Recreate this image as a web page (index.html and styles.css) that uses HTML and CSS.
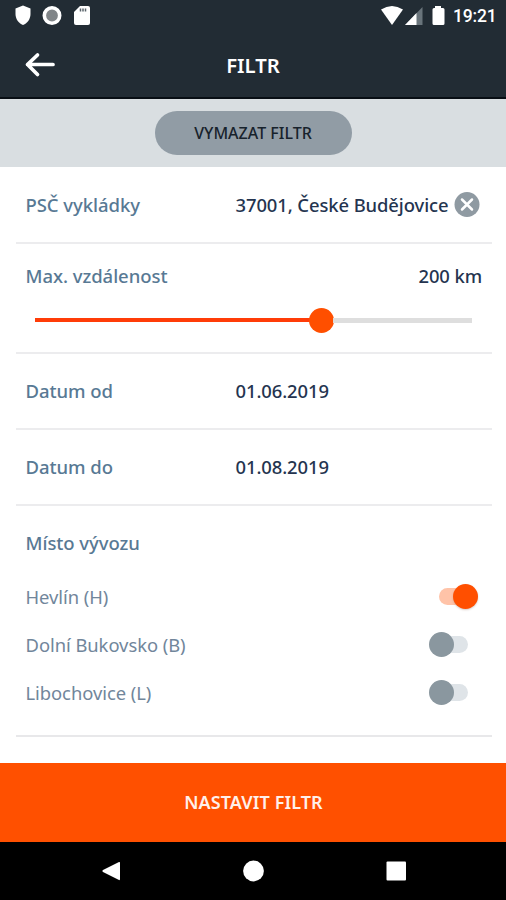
FILE: index.html
```html
<!DOCTYPE html>
<html lang="cs">
<head>
<meta charset="utf-8">
<title>Filtr</title>
<link rel="stylesheet" href="styles.css">
</head>
<body>
<div class="screen">
  <header class="top">
    <div class="status">
      <svg class="status-left" width="78" height="32" viewBox="0 0 78 32">
        <path d="M9 5.500L16.500 8.500V14C16.500 19 13.500 23 9 25C4.500 23 1.500 19 1.500 14V8.500Z" fill="#fff"/>
        <circle cx="38" cy="15.500" r="7.700" fill="#808588" stroke="#fff" stroke-width="3.600"/>
        <path d="M66 6H74Q76 6 76 8V23Q76 25 74 25H62Q60 25 60 23V12Z" fill="#fff"/>
        <path d="M66.500 8.500v3M69 8.500v3M71.500 8.500v3" stroke="#59636a" stroke-width="1.500"/>
      </svg>
      <svg class="status-right" width="66" height="32" viewBox="0 0 66 32">
        <path d="M0 9.500Q11 2.500 22 9.500L11 25Z" fill="#fff"/>
        <path d="M41.500 7V25H24Z" fill="#69747b"/>
        <path d="M35.500 13V25H24Z" fill="#fff"/>
        <path d="M54 6h6v2h2q1.500 0 1.500 1.500V23.500Q63.500 25 62 25H53Q51.500 25 51.500 23.500V9.500Q51.500 8 53 8h1Z" fill="#fff"/>
      </svg>
      <span class="clock">19:21</span>
    </div>
    <div class="bar">
      <svg class="back" width="32" height="28" viewBox="0 0 32 28">
        <path d="M29 13.500H3.500M13.500 4L3.500 13.500L13.500 23.500" fill="none" stroke="#fff" stroke-width="3.700" stroke-linecap="round" stroke-linejoin="round"/>
      </svg>
      <h1 class="title">FILTR</h1>
    </div>
  </header>
  <div class="clear-band"><button class="clear">VYMAZAT FILTR</button></div>
  <main class="form">
    <section class="row first">
      <span class="label">PSČ vykládky</span>
      <span class="value">37001, České Budějovice</span>
      <svg class="remove" width="26" height="26" viewBox="0 0 26 26">
        <circle cx="13" cy="12.500" r="12.500" fill="#8f9aa2"/>
        <path d="M8 7.500L18 17.500M18 7.500L8 17.500" stroke="#fff" stroke-width="2.500" stroke-linecap="round"/>
      </svg>
    </section>
    <section class="distance">
      <div class="distance-head">
        <span class="label">Max. vzdálenost</span>
        <span class="value">200 km</span>
      </div>
      <div class="slider">
        <span class="filled"></span><span class="thumb"></span><span class="rest"></span>
      </div>
    </section>
    <section class="row"><span class="label">Datum od</span><span class="value">01.06.2019</span></section>
    <section class="row"><span class="label">Datum do</span><span class="value">01.08.2019</span></section>
    <section class="places">
      <h2 class="label heading">Místo vývozu</h2>
      <div class="place"><span class="name">Hevlín (H)</span><span class="switch on"><i class="track"></i><i class="knob"></i></span></div>
      <div class="place"><span class="name">Dolní Bukovsko (B)</span><span class="switch"><i class="knob"></i><i class="track"></i></span></div>
      <div class="place"><span class="name">Libochovice (L)</span><span class="switch"><i class="knob"></i><i class="track"></i></span></div>
    </section>
  </main>
  <button class="submit">NASTAVIT FILTR</button>
  <nav class="nav">
    <svg width="506" height="58" viewBox="0 0 506 58" fill="#fff">
      <path d="M119 20Q120 19.500 120 21V37Q120 38.500 119 38L103 30Q101.500 29 103 28Z"/>
      <circle cx="253.500" cy="29" r="10.400"/>
      <rect x="386.500" y="19.500" width="19.500" height="19" rx="1"/>
    </svg>
  </nav>
</div>
</body>
</html>
```
FILE: styles.css
```css
* { box-sizing: border-box; }
body { margin: 0; background: #fff; font-family: "Noto Sans", "Open Sans", sans-serif; }
button { border: 0; padding: 0; font-family: inherit; }
.screen { width: 506px; height: 900px; display: flex; flex-direction: column; overflow: hidden; }
.top { height: 99px; background: #222c34; border-bottom: 2px solid #080e14; color: #fff; }
.status { display: flex; height: 32px; padding: 0 10px 0 14px; align-items: center; }
.status-right { margin-left: auto; }
.clock { margin-left: 6px; width: 43px; font: 500 17.500px/32px Roboto, sans-serif; text-align: right; letter-spacing: -0.2px; white-space: nowrap; }
.bar { display: grid; grid-template-columns: 32px 1fr 32px; align-items: center; height: 65px; padding: 0 24px; }
.title { margin: 0; font-size: 20.300px; font-weight: 600; line-height: 28px; text-align: center; }
.clear-band { height: 68px; background: #d9dee1; display: flex; justify-content: center; padding-top: 12px; }
.clear { width: 197px; height: 44px; border-radius: 22px; background: #919ca5; color: #17222c; font-size: 16px; font-weight: 500; padding-bottom: 1px; }
.form { height: 596px; padding: 0 14px 0 16px; }
.row { display: flex; align-items: center; height: 76px; padding: 0 10px 0 9.500px; border-bottom: 2px solid #ececee; }
.row.first { height: 77px; padding-right: 12px; }
.label { width: 210px; font-size: 18.500px; font-weight: 500; color: #587994; line-height: 26px; letter-spacing: -0.05px; }
.value { font-size: 18.400px; font-weight: 500; color: #24344f; line-height: 26px; letter-spacing: -0.08px; white-space: nowrap; }
.remove { margin-left: auto; }
.distance { height: 110px; padding: 19px 10px 0 9.500px; border-bottom: 2px solid #ececee; }
.distance-head { display: flex; justify-content: space-between; }
.slider { display: flex; align-items: center; height: 26px; margin: 18px 10px 0 9.500px; }
.filled { width: 275px; height: 4px; background: #ff3c08; }
.thumb { width: 25px; height: 25px; border-radius: 50%; background: #ff4f00; margin: 0 -1px; }
.rest { flex: 1; height: 5px; background: #dedede; }
.places { height: 231px; padding: 24px 10px 0 9.500px; border-bottom: 2px solid #e8e8ea; }
.heading { margin: 0 0 16px; }
.place { display: flex; align-items: center; justify-content: space-between; height: 48.300px; }
.name { font-size: 18.400px; font-weight: 400; color: #71869b; letter-spacing: -0.05px; }
.switch { display: flex; align-items: center; width: 53px; height: 26px; }
.knob { width: 25px; height: 25px; border-radius: 50%; background: #8a979f; }
.track { width: 20px; height: 17px; border-radius: 9px; background: #dfe4e8; }
.switch .knob + .track { width: 23px; margin-left: -9px; border-radius: 0 9px 9px 0; }
.switch .knob { position: relative; z-index: 1; }
.switch.on { padding-left: 10px; }
.switch.on .track { background: #ffc3a8; border-radius: 9px 0 0 9px; }
.switch.on .knob { background: #ff4f00; margin-left: -6px; box-shadow: 0 1px 2px #9c7f7066; }
.submit { height: 79px; background: #ff5000; color: #fff0eb; font-size: 18px; font-weight: 600; padding: 0 0 2px 1px; letter-spacing: 0.1px; }
.nav { height: 58px; background: #000; }
.nav svg { display: block; }
```
